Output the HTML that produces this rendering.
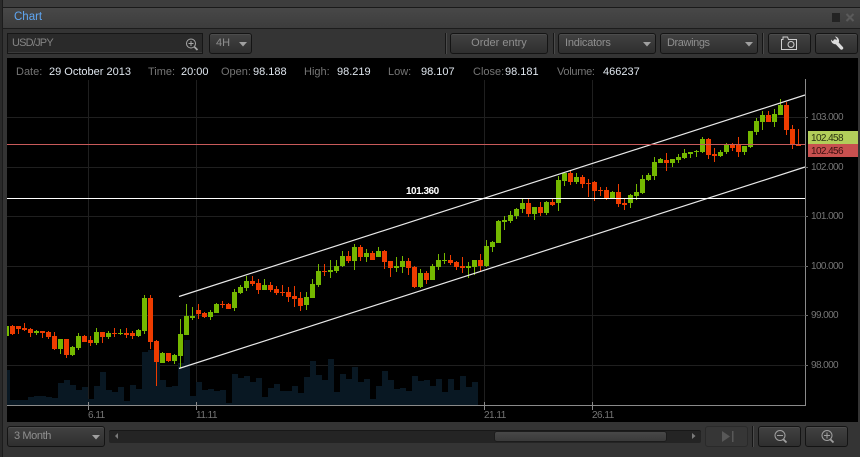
<!DOCTYPE html>
<html><head><meta charset="utf-8"><style>
html,body{margin:0;padding:0;background:#333}
#r{position:relative;width:860px;height:457px;overflow:hidden;background:#343434;font:11px "Liberation Sans",sans-serif;color:#8c8c8c}
#r div,#r span.a{position:absolute;box-sizing:border-box;white-space:nowrap}
.b{background:linear-gradient(#424242,#2f2f2f);border:1px solid #141414;border-radius:3px;box-shadow:inset 0 1px #4c4c4c;line-height:19px;height:21px;color:#8f8f8f}
.l{color:#757575;top:66px;line-height:13px;font-size:11px}
.v{color:#dfe6ee;top:66px;line-height:13px;font-size:11px}
.y{color:#757575;left:811px;font-size:10px;line-height:12px;letter-spacing:-.6px}
.x{color:#757575;top:410px;font-size:10px;line-height:12px;letter-spacing:-.5px}
.s{width:1px;background:#161616;box-shadow:1px 0 #4a4a4a;height:21px}
svg{position:absolute;left:0;top:0}
</style></head><body><div id="r">
<div style="left:0;top:0;width:860px;height:8px;background:#3d3d3d;border-bottom:1px solid #1a1a1a"></div>
<div style="left:0;top:8px;width:860px;height:21px;background:linear-gradient(#484848,#3c3c3c);border-bottom:1px solid #1c1c1c"></div>
<div style="left:0;top:0;width:3px;height:457px;background:#2a2a2a;border-right:1px solid #1c1c1c"></div>
<div style="left:14px;top:10px;color:#5fa6f2;font-size:11.500px;line-height:15px">Chart</div>
<div style="left:832px;top:13px;width:8px;height:9px;background:#232323"></div>
<div style="left:7px;top:58px;width:851px;height:364px;background:#000"></div>

<div style="left:7px;top:33px;width:196px;height:21px;background:#2a2a2a;border:1px solid #161616;box-shadow:inset 0 -1px #3a3a3a;line-height:19px;padding-left:4px;color:#858585;letter-spacing:-.8px">USD/JPY</div>
<div class="b" style="left:209px;top:33px;width:43px;padding-left:6px">4H</div>
<div class="s" style="left:445px;top:33px"></div>
<div class="b" style="left:450px;top:33px;width:98px;text-align:center">Order entry</div>
<div class="s" style="left:553px;top:33px"></div>
<div class="b" style="left:558px;top:33px;width:98px;padding-left:6px;letter-spacing:-.2px">Indicators</div>
<div class="b" style="left:660px;top:33px;width:98px;padding-left:6px;letter-spacing:-.4px">Drawings</div>
<div class="s" style="left:762px;top:33px"></div>
<div class="b" style="left:768px;top:33px;width:43px"></div>
<div class="b" style="left:815px;top:33px;width:43px"></div>

<div class="b" style="left:7px;top:426px;width:98px;padding-left:6px;letter-spacing:-.4px">3 Month</div>
<div style="left:109px;top:430px;width:592px;height:13px;background:#242424;border-top:1px solid #181818;border-radius:2px"></div>
<div style="left:494px;top:431px;width:173px;height:11px;background:linear-gradient(#484848,#3a3a3a);border:1px solid #1c1c1c;border-radius:3px"></div>
<div style="left:705px;top:426px;width:43px;height:21px;background:#363636;border:1px solid #2a2a2a;border-radius:3px"></div>
<div class="s" style="left:752px;top:426px"></div>
<div class="b" style="left:758px;top:426px;width:43px"></div>
<div class="b" style="left:805px;top:426px;width:43px"></div>

<svg width="860" height="457" viewBox="0 0 860 457">
<defs><clipPath id="c"><rect x="7" y="58" width="799" height="348"/></clipPath></defs>
<g shape-rendering="crispEdges" fill="#1f1f1f">
<rect x="7" y="117" width="801" height="1"/><rect x="7" y="167" width="801" height="1"/><rect x="7" y="216" width="801" height="1"/><rect x="7" y="266" width="801" height="1"/><rect x="7" y="315" width="801" height="1"/><rect x="7" y="365" width="801" height="1"/>
<rect x="88" y="80" width="1" height="325"/><rect x="196" y="80" width="1" height="325"/><rect x="484" y="80" width="1" height="325"/><rect x="592" y="80" width="1" height="325"/>
</g>
<path clip-path="url(#c)" shape-rendering="crispEdges" fill="#091823" d="M7 405V370H10V400H28V397H34V396H46V397H52V398H58V383H64V380H70V385H76V390H82V387H88V399H94V386H100V372H106V390H112V392H118V387H124V401H130V385H136V389H142V352H148V350H160V380H166V387H172V386H178V363H184V340H190V396H196V382H202V390H208V389H214V391H220V390H226V403H232V374H238V378H244V376H250V382H256V378H262V397H268V388H274V384H280V391H292V386H298V393H304V377H310V361H316V375H322V380H328V359H334V392H340V374H346V379H352V367H358V382H364V379H370V399H376V386H382V371H388V380H394V389H400V388H406V391H412V376H418V381H424V380H430V386H436V379H442V392H448V379H454V390H460V376H466V387H472V382H478V405Z"/>
<g clip-path="url(#c)" shape-rendering="crispEdges">
<path fill="#74b800" d="M4 326h5V336h-5zM34 331h5V333h-5zM36 330h1V335h-1zM58 339h5V349h-5zM60 339h1V354h-1zM70 347h5V355h-5zM72 346h1V356h-1zM76 336h5V348h-5zM78 333h1V350h-1zM94 332h5V343h-5zM96 328h1V345h-1zM106 333h5V337h-5zM108 331h1V339h-1zM118 333h5V334h-5zM120 329h1V335h-1zM136 330h5V336h-5zM138 329h1V337h-1zM142 298h5V331h-5zM144 295h1V334h-1zM160 353h5V363h-5zM162 352h1V363h-1zM172 355h5V361h-5zM174 354h1V364h-1zM178 334h5V356h-5zM180 319h1V368h-1zM184 316h5V335h-5zM186 304h1V335h-1zM190 316h5V318h-5zM192 307h1V320h-1zM208 312h5V317h-5zM210 310h1V320h-1zM214 304h5V313h-5zM216 303h1V313h-1zM232 292h5V308h-5zM234 289h1V311h-1zM238 287h5V293h-5zM240 285h1V294h-1zM244 281h5V288h-5zM246 276h1V291h-1zM262 285h5V290h-5zM264 279h1V290h-1zM304 297h5V305h-5zM306 292h1V310h-1zM310 284h5V298h-5zM312 279h1V298h-1zM316 271h5V285h-5zM318 264h1V287h-1zM328 270h5V272h-5zM330 260h1V278h-1zM334 266h5V271h-5zM336 260h1V273h-1zM340 256h5V266h-5zM342 251h1V267h-1zM352 247h5V261h-5zM354 244h1V270h-1zM364 253h5V257h-5zM366 249h1V262h-1zM376 251h5V257h-5zM378 247h1V257h-1zM394 266h5V268h-5zM396 257h1V272h-1zM400 261h5V267h-5zM402 256h1V273h-1zM418 273h5V287h-5zM420 269h1V288h-1zM430 266h5V280h-5zM432 264h1V280h-1zM436 260h5V267h-5zM438 254h1V270h-1zM442 260h5V261h-5zM444 253h1V264h-1zM466 266h5V268h-5zM468 262h1V278h-1zM472 260h5V267h-5zM474 260h1V275h-1zM484 246h5V266h-5zM486 240h1V267h-1zM490 242h5V247h-5zM492 241h1V252h-1zM496 221h5V243h-5zM498 220h1V243h-1zM502 220h5V222h-5zM504 216h1V230h-1zM508 215h5V221h-5zM510 211h1V223h-1zM514 209h5V216h-5zM516 208h1V219h-1zM520 203h5V209h-5zM522 199h1V213h-1zM532 207h5V214h-5zM534 207h1V220h-1zM544 202h5V213h-5zM546 201h1V215h-1zM556 180h5V203h-5zM558 176h1V211h-1zM562 173h5V181h-5zM564 172h1V186h-1zM574 177h5V182h-5zM576 173h1V184h-1zM610 192h5V198h-5zM612 191h1V199h-1zM628 195h5V203h-5zM630 194h1V208h-1zM634 192h5V196h-5zM636 184h1V200h-1zM640 179h5V193h-5zM642 175h1V194h-1zM646 175h5V180h-5zM648 173h1V181h-1zM652 162h5V176h-5zM654 157h1V180h-1zM658 159h5V163h-5zM660 158h1V163h-1zM670 159h5V163h-5zM672 159h1V167h-1zM676 157h5V160h-5zM678 154h1V163h-1zM682 153h5V158h-5zM684 149h1V159h-1zM688 152h5V154h-5zM690 152h1V158h-1zM694 151h5V152h-5zM696 150h1V157h-1zM700 139h5V152h-5zM702 137h1V153h-1zM718 152h5V156h-5zM720 150h1V157h-1zM724 145h5V152h-5zM726 143h1V154h-1zM742 146h5V152h-5zM744 146h1V155h-1zM748 131h5V147h-5zM750 131h1V148h-1zM754 121h5V132h-5zM756 118h1V135h-1zM760 115h5V122h-5zM762 111h1V130h-1zM772 114h5V122h-5zM774 109h1V127h-1zM778 105h5V115h-5zM780 99h1V115h-1z"/>
<path fill="#ee3c00" d="M10 326h5V334h-5zM12 325h1V335h-1zM16 326h5V329h-5zM18 326h1V334h-1zM22 328h5V330h-5zM24 323h1V331h-1zM28 329h5V333h-5zM30 328h1V337h-1zM40 331h5V333h-5zM42 331h1V338h-1zM46 332h5V337h-5zM48 331h1V339h-1zM52 336h5V349h-5zM54 332h1V350h-1zM64 339h5V355h-5zM66 339h1V358h-1zM82 336h5V342h-5zM84 335h1V342h-1zM88 340h5V343h-5zM90 336h1V346h-1zM100 332h5V337h-5zM102 332h1V343h-1zM112 333h5V334h-5zM114 328h1V337h-1zM124 333h5V335h-5zM126 328h1V338h-1zM130 333h5V336h-5zM132 331h1V339h-1zM148 298h5V342h-5zM150 295h1V349h-1zM154 341h5V362h-5zM156 340h1V386h-1zM166 353h5V361h-5zM168 353h1V362h-1zM196 310h5V314h-5zM198 304h1V319h-1zM202 313h5V317h-5zM204 312h1V318h-1zM220 304h5V305h-5zM222 301h1V308h-1zM226 304h5V309h-5zM228 303h1V309h-1zM250 281h5V284h-5zM252 276h1V286h-1zM256 283h5V290h-5zM258 279h1V294h-1zM268 285h5V290h-5zM270 282h1V292h-1zM274 289h5V293h-5zM276 286h1V295h-1zM280 292h5V293h-5zM282 285h1V296h-1zM286 292h5V297h-5zM288 287h1V302h-1zM292 296h5V299h-5zM294 286h1V307h-1zM298 298h5V306h-5zM300 292h1V311h-1zM322 271h5V272h-5zM324 264h1V276h-1zM346 256h5V261h-5zM348 251h1V263h-1zM358 247h5V257h-5zM360 245h1V261h-1zM370 253h5V260h-5zM372 251h1V260h-1zM382 251h5V262h-5zM384 250h1V269h-1zM388 261h5V268h-5zM390 261h1V277h-1zM406 261h5V268h-5zM408 258h1V275h-1zM412 267h5V287h-5zM414 266h1V288h-1zM424 273h5V280h-5zM426 271h1V284h-1zM448 260h5V263h-5zM450 255h1V265h-1zM454 262h5V267h-5zM456 261h1V270h-1zM460 266h5V268h-5zM462 257h1V273h-1zM478 260h5V266h-5zM480 254h1V271h-1zM526 203h5V214h-5zM528 199h1V217h-1zM538 207h5V213h-5zM540 202h1V216h-1zM550 202h5V205h-5zM552 199h1V206h-1zM568 173h5V182h-5zM570 171h1V185h-1zM580 177h5V184h-5zM582 175h1V188h-1zM586 183h5V184h-5zM588 179h1V197h-1zM592 182h5V191h-5zM594 181h1V201h-1zM598 190h5V191h-5zM600 187h1V196h-1zM604 190h5V198h-5zM606 187h1V200h-1zM616 192h5V204h-5zM618 184h1V207h-1zM622 203h5V205h-5zM624 199h1V210h-1zM664 160h5V163h-5zM666 153h1V171h-1zM706 139h5V155h-5zM708 138h1V159h-1zM712 154h5V156h-5zM714 148h1V162h-1zM730 145h5V148h-5zM732 143h1V151h-1zM736 145h5V152h-5zM738 137h1V157h-1zM766 115h5V122h-5zM768 111h1V122h-1zM784 105h5V130h-5zM786 102h1V135h-1zM790 129h5V145h-5zM792 125h1V149h-1zM796 145h5V146h-5zM798 129h1V145h-1z"/>
</g>
<g stroke="#e8e8e8" stroke-width="1.2" fill="none"><path d="M179 296.5L805 95"/><path d="M179 368.5L805 167"/></g>
<g shape-rendering="crispEdges">
<rect x="7" y="198" width="798" height="1" fill="#fff"/>
<rect x="7" y="144" width="798" height="1" fill="#c85a5a"/>
<rect x="805" y="79" width="1" height="327" fill="#8a8a8a"/>
<rect x="7" y="405" width="799" height="1" fill="#8a8a8a"/>
<g fill="#6a6a6a"><rect x="805" y="117" width="3" height="1"/><rect x="805" y="167" width="3" height="1"/><rect x="805" y="216" width="3" height="1"/><rect x="805" y="266" width="3" height="1"/><rect x="805" y="315" width="3" height="1"/><rect x="805" y="365" width="3" height="1"/></g>
<g fill="#8a8a8a"><rect x="88" y="402" width="1" height="8"/><rect x="196" y="402" width="1" height="8"/><rect x="484" y="402" width="1" height="8"/><rect x="592" y="402" width="1" height="8"/></g>
<rect x="808" y="131" width="50" height="13" fill="#b2ce5a"/>
<rect x="808" y="144" width="50" height="13" fill="#c8504f"/>
</g>
<!-- carets -->
<g fill="#a0a0a0"><path d="M239 42h8l-4 4.500z"/><path d="M643 42h8l-4 4.500z"/><path d="M745 42h8l-4 4.500z"/><path d="M92 435h8l-4 4.500z"/></g>
<!-- magnifier -->
<g fill="none" stroke="#a8a8a8" stroke-width="1"><circle cx="191" cy="43.500" r="4.500"/><path d="M188.500 43.500h5M191 41v5"/><path d="M194.500 47l3 3" stroke-width="1.800"/></g>
<!-- camera -->
<path d="M781.500 49.500V39.500H783V37H787.500L788.500 39.500H796.500V49.500Z" fill="none" stroke="#cfcfcf"/><circle cx="791" cy="44.500" r="3" fill="none" stroke="#cfcfcf"/>
<!-- wrench -->
<path d="M835 41L841.500 48" stroke="#dcdcdc" stroke-width="3.400" stroke-linecap="round" fill="none"/><path d="M831 39.500A4.500 4.500 0 0 0 837 44L839 42A4.500 4.500 0 0 0 835 36.500L837 39L835.500 41.500L832.500 41Z" fill="#dcdcdc"/>
<!-- close X -->
<path d="M846.500 14L853.500 21M853.500 14L846.500 21" stroke="#5a5a5a" stroke-width="2" fill="none"/>
<!-- scroll arrows -->
<path d="M118 433v6l-3-3z" fill="#7a7a7a"/><path d="M692 433v6l3.500-3z" fill="#7a7a7a"/>
<!-- skip end -->
<path d="M722 431V442L730 436.500Z" fill="#585858"/><rect x="732" y="431" width="1.500" height="11" fill="#585858"/>
<!-- zoom -->
<g fill="none" stroke="#a0a0a0"><circle cx="780" cy="435.500" r="5"/><path d="M777 435.500h6"/><path d="M783.500 439.500l3 3" stroke-width="1.800"/><circle cx="827" cy="435.500" r="5"/><path d="M824 435.500h6M827 432.500v6"/><path d="M830.500 439.500l3 3" stroke-width="1.800"/></g>
</svg>

<div class="l" style="left:16px">Date:</div><div class="v" style="left:49px">29 October 2013</div>
<div class="l" style="left:148px">Time:</div><div class="v" style="left:181px">20:00</div>
<div class="l" style="left:221px">Open:</div><div class="v" style="left:253px">98.188</div>
<div class="l" style="left:304px">High:</div><div class="v" style="left:337px">98.219</div>
<div class="l" style="left:388px">Low:</div><div class="v" style="left:421px">98.107</div>
<div class="l" style="left:473px">Close:</div><div class="v" style="left:505px">98.181</div>
<div class="l" style="left:557px;letter-spacing:-.3px">Volume:</div><div class="v" style="left:603px">466237</div>

<div style="left:406px;top:186px;color:#fff;font-size:10px;font-weight:bold;line-height:12px;letter-spacing:-.5px">101.360</div>
<div class="y" style="top:112px">103.000</div>
<div class="y" style="top:162px">102.000</div>
<div class="y" style="top:211px">101.000</div>
<div class="y" style="top:261px">100.000</div>
<div class="y" style="top:310px">99.000</div>
<div class="y" style="top:360px">98.000</div>
<div class="y" style="top:133px;color:#2a3310">102.458</div>
<div class="y" style="top:146px;color:#3a1010">102.456</div>
<div class="x" style="left:88px">6.11</div>
<div class="x" style="left:196px">11.11</div>
<div class="x" style="left:484px">21.11</div>
<div class="x" style="left:592px">26.11</div>
</div></body></html>
